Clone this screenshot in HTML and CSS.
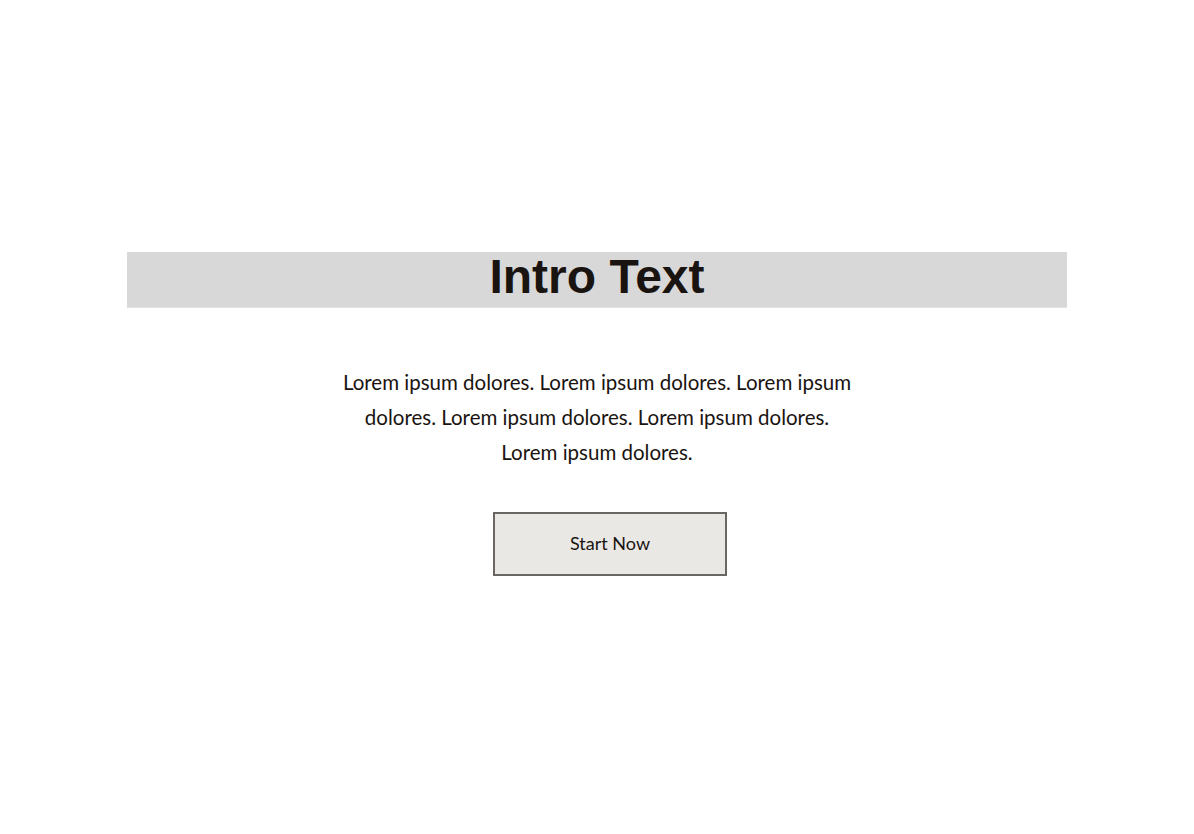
FILE: index.html
```html
<!DOCTYPE html>
<html lang="en">
<head>
<meta charset="utf-8">
<title>Intro</title>
<link rel="stylesheet" href="styles.css">
</head>
<body>
<main class="intro">
  <h1 class="intro-title">Intro Text</h1>
  <p class="intro-body">Lorem ipsum dolores. Lorem ipsum dolores. Lorem ipsum dolores. Lorem ipsum dolores. Lorem ipsum dolores. Lorem ipsum dolores.</p>
  <div class="actions">
    <button class="btn-start" type="button">Start Now</button>
  </div>
</main>
</body>
</html>
```
FILE: styles.css
```css
html, body {
  margin: 0;
  padding: 0;
  background: #ffffff;
}
body {
  font-family: "Lato", "Liberation Sans", sans-serif;
  color: #1a1411;
}
.intro {
  display: flex;
  flex-direction: column;
  align-items: center;
  padding: 252px 127px 0;
}
.intro-title {
  align-self: stretch;
  margin: 0;
  height: 56px;
  background: #d8d8d8;
  border-bottom: 1px solid #e4e4e4;
  box-sizing: border-box;
  font-family: "Liberation Sans", Arial, sans-serif;
  font-weight: 700;
  font-size: 48px;
  line-height: 50px;
  text-align: center;
  color: #1a1411;
}
.intro-body {
  margin: 57px 0 0;
  width: 520px;
  font-size: 20.5px;
  line-height: 35px;
  text-align: center;
  color: #1a1411;
}
.actions {
  margin-top: 42px;
  padding-left: 26px;
}
.btn-start {
  display: block;
  box-sizing: border-box;
  width: 234px;
  height: 64px;
  border: 2px solid #6a6664;
  background: #e9e8e5;
  font-family: "Lato", "Liberation Sans", sans-serif;
  font-size: 18px;
  line-height: 58px;
  color: #1a1411;
  padding: 0 0 2px;
}
```
